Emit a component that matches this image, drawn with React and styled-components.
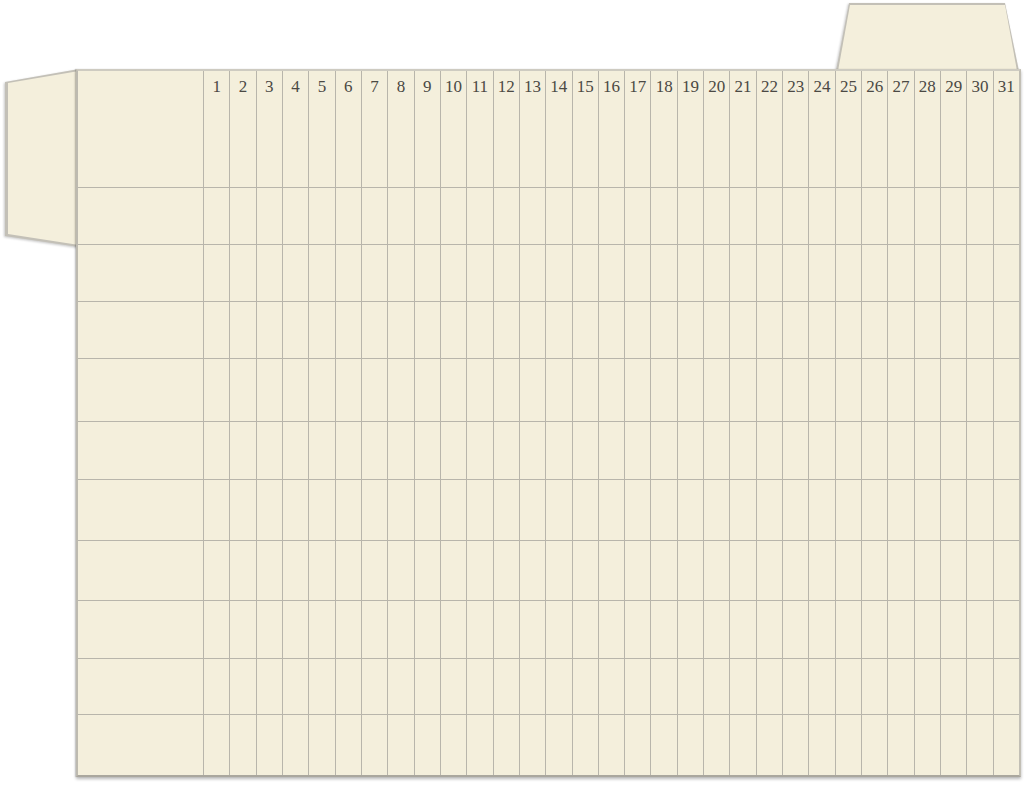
import styled, { createGlobalStyle } from "styled-components"

const GlobalStyle = createGlobalStyle`
  html, body {
    margin: 0;
    padding: 0;
    background: #ffffff;
  }
`

const paper = "#f4efdc"
const rule = "#b8b5ab"
const edge = "#c3c0b7"

// row heights read off the printed sheet (it isn't perfectly even)
const rowHeights = [56, 56, 56, 62, 57, 60, 59, 57, 55, 60]
const days = Array.from({ length: 31 }, (_, i) => i + 1)

const Page = styled.div`
  display: flex;
  flex-direction: column;
  padding-top: 3px;
  width: 1024px;
  height: 787px;
  box-sizing: border-box;
  overflow: hidden;
`

const TabRow = styled.div`
  display: flex;
  justify-content: flex-end;
  padding-right: 5px;
  height: 66px;
`

const TabShadow = styled.div`
  filter: drop-shadow(-1px 1px 1px rgba(0, 0, 0, 0.22));
`

// gray outline of a tab, the cream face sits inside it
const TabEdge = styled.div`
  width: ${({ $w }) => $w}px;
  height: ${({ $h }) => $h}px;
  box-sizing: border-box;
  padding: ${({ $pad }) => $pad};
  background: ${edge};
  clip-path: ${({ $shape }) => $shape};
`

const TabFace = styled.div`
  width: 100%;
  height: 100%;
  background: ${paper};
  clip-path: ${({ $shape }) => $shape};
`

const SheetRow = styled.div`
  display: flex;
  align-items: flex-start;
  padding-left: 5px;
`

const SideSlot = styled.div`
  margin-right: -3px;
`

const Card = styled.div`
  position: relative;
  z-index: 1;
  width: 945px;
  box-sizing: border-box;
  border: 2px solid;
  border-color: #cecbc1 #c2bfb5 #aaa79e #bdbab0;
  box-shadow: -1px 0 1px rgba(0, 0, 0, 0.12), 0 2px 3px rgba(0, 0, 0, 0.28);
  background: ${paper};
`

const Grid = styled.div`
  display: grid;
  grid-template-columns: 125px repeat(31, 1fr);
  grid-template-rows: 116px ${rowHeights.map((h) => `${h}px`).join(" ")};
  gap: 1px;
  background: ${rule};
`

const Cell = styled.div`
  background: ${paper};
`

const DayCell = styled(Cell)`
  display: flex;
  justify-content: center;
  padding-top: 6px;
  font-family: "Liberation Serif", "DejaVu Serif", serif;
  font-size: 17px;
  line-height: 20px;
  color: #4b4944;
`

export default function App () {
  return (
    <>
      <GlobalStyle />
      <Page>
        <TabRow>
          <TabShadow>
            <TabEdge
              $w={183}
              $h={68}
              $pad="2px 2px 0"
              $shape="polygon(13px 0, 169px 0, 100% 100%, 0 100%)"
            >
              <TabFace $shape="polygon(12px 0, 167px 0, 100% 100%, 0 100%)" />
            </TabEdge>
          </TabShadow>
        </TabRow>
        <SheetRow>
          <SideSlot>
            <TabShadow>
              <TabEdge
                $w={74}
                $h={178}
                $pad="2px 0 2px 3px"
                $shape="polygon(0 13px, 100% 0, 100% 100%, 0 167px)"
              >
                <TabFace $shape="polygon(0 12px, 100% 0, 100% 100%, 0 163px)" />
              </TabEdge>
            </TabShadow>
          </SideSlot>
          <Card>
            <Grid>
              <Cell />
              {days.map((d) => (
                <DayCell key={d}>{d}</DayCell>
              ))}
              {rowHeights.map((_, r) =>
                Array.from({ length: 32 }, (_, c) => <Cell key={`${r}-${c}`} />)
              )}
            </Grid>
          </Card>
        </SheetRow>
      </Page>
    </>
  )
}
